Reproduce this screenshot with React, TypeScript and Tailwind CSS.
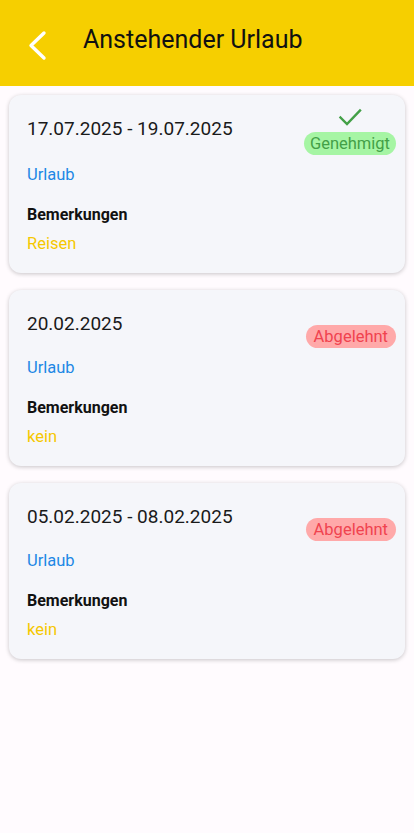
const leaves = [
    { date: '17.07.2025 - 19.07.2025', status: 'approved', type: 'Urlaub', note: 'Reisen' },
    { date: '20.02.2025', status: 'rejected', type: 'Urlaub', note: 'kein' },
    { date: '05.02.2025 - 08.02.2025', status: 'rejected', type: 'Urlaub', note: 'kein' },
];

const BackIcon = () => (
    <svg width="24" height="32" viewBox="0 0 24 32" fill="none">
        <path d="M17 4 L4 16.5 L17 29" stroke="white" strokeWidth="3.4" strokeLinecap="round" strokeLinejoin="round" />
    </svg>
);

const CheckIcon = () => (
    <svg width="24" height="24" viewBox="0 0 24 24" fill="none">
        <path d="M2.5 12.5 L9 19 L22 5.5" stroke="#43a047" strokeWidth="2.4" strokeLinecap="square" />
    </svg>
);

export default function App() {
    return (
        <div
            className="min-h-[833px] bg-[#fffbfe]"
            style={{ fontFamily: 'Roboto, "Noto Sans", sans-serif' }}
        >
            <header className="h-[86px] bg-[#f6cf00] flex items-center pb-[6px]">
                <div className="ml-[27px] mt-[10px] w-[24px]">
                    <BackIcon />
                </div>
                <h1 className="ml-[32px] text-[25px] leading-[30px] text-[#111]">
                    Anstehender Urlaub
                </h1>
            </header>

            <div className="px-[9px] pt-[9px] flex flex-col gap-[17px]">
                {leaves.map((l, i) => (
                    <div
                        key={i}
                        className="bg-[#f5f6fa] rounded-[12px] shadow-[0_1px_4px_rgba(0,0,0,0.22)] pl-[18px] pr-[9px] pt-[10px] pb-[18px]"
                    >
                        <div className="flex justify-between items-start">
                            <div className="mt-[12px] text-[19px] leading-[24px] text-[#1a1a1a]">
                                {l.date}
                            </div>
                            {l.status === 'approved' ? (
                                <div className="flex flex-col items-center">
                                    <CheckIcon />
                                    <span className="mt-[3px] h-[23px] px-[6px] rounded-full bg-[#a6f5a4] text-[#43a047] text-[16.5px] leading-[23px]">
                                        Genehmigt
                                    </span>
                                </div>
                            ) : (
                                <span className="mt-[25px] h-[23px] px-[8px] rounded-full bg-[#ffa9a9] text-[#f0434f] text-[16.5px] leading-[23px]">
                                    Abgelehnt
                                </span>
                            )}
                        </div>
                        <div className="mt-[9px] text-[16.5px] leading-[22px] text-[#1e88e5]">
                            {l.type}
                        </div>
                        <div className="mt-[19px] text-[16px] leading-[20px] font-bold text-[#111]">
                            Bemerkungen
                        </div>
                        <div className="mt-[8px] text-[16.5px] leading-[22px] text-[#f5c800]">
                            {l.note}
                        </div>
                    </div>
                ))}
            </div>
        </div>
    );
}
